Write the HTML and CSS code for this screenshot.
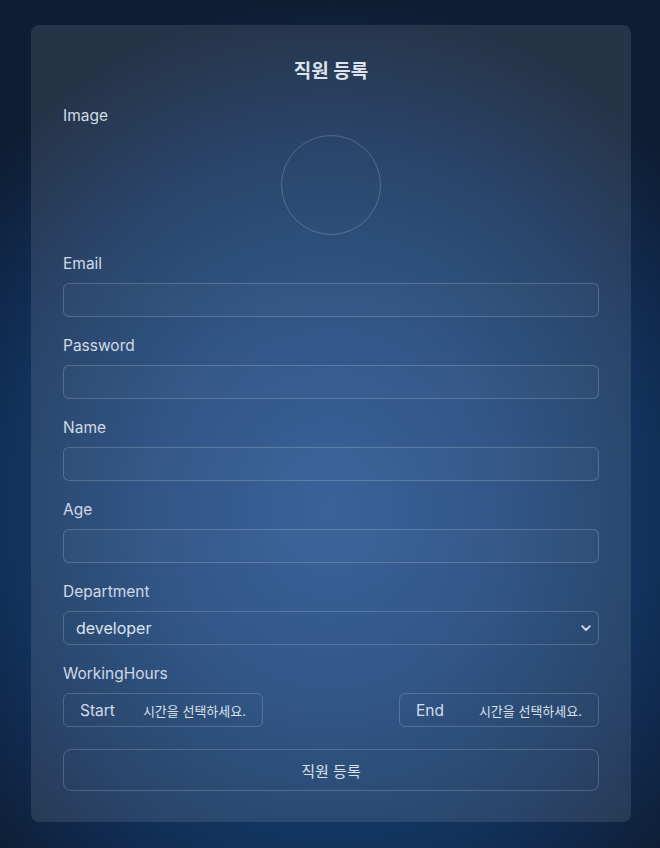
FILE: index.html
```html
<!DOCTYPE html>
<html lang="ko">
<head>
<meta charset="utf-8">
<link rel="stylesheet" href="styles.css">
</head>
<body>
<main class="page">
  <form class="card">
    <h2 class="title">직원 등록</h2>
    <div class="field">
      <label class="label">Image</label>
      <div class="avatar-wrap"><div class="avatar"></div></div>
    </div>
    <div class="field">
      <label class="label">Email</label>
      <input class="input" type="text">
    </div>
    <div class="field">
      <label class="label">Password</label>
      <input class="input" type="password">
    </div>
    <div class="field">
      <label class="label">Name</label>
      <input class="input" type="text">
    </div>
    <div class="field">
      <label class="label">Age</label>
      <input class="input" type="text">
    </div>
    <div class="field">
      <label class="label">Department</label>
      <div class="select">
        <span>developer</span>
        <svg class="chev" width="10" height="7" viewBox="0 0 10 7"><path d="M1.2 1.2 L5 5 L8.8 1.2" fill="none" stroke="#d6dfea" stroke-width="1.8" stroke-linecap="round" stroke-linejoin="round"/></svg>
      </div>
    </div>
    <div class="field">
      <label class="label">WorkingHours</label>
      <div class="hours">
        <div class="time"><span class="time-label">Start</span><span class="time-ph">시간을 선택하세요.</span></div>
        <div class="time"><span class="time-label">End</span><span class="time-ph">시간을 선택하세요.</span></div>
      </div>
    </div>
    <button class="submit" type="button">직원 등록</button>
  </form>
</main>
</body>
</html>
```
FILE: styles.css
```css
* { box-sizing: border-box; }
html, body { margin: 0; height: 100%; }
body {
  font-family: Inter, "Noto Sans CJK KR", sans-serif;
  background: radial-gradient(ellipse 70% 60% at 50% 60%, #23528f 0%, #1a4278 40%, #12315b 70%, #0e1d33 100%);
  color: #d3dce8;
}
.page {
  padding: 25px 30px 0 31px;
}
.card {
  width: 600px;
  background: rgba(255,255,255,0.1);
  border-radius: 8px;
  padding: 35px 32px 31px;
  display: flex;
  flex-direction: column;
}
.title {
  margin: 0 0 21px;
  text-align: center;
  font-size: 19px;
  line-height: 24px;
  font-weight: 700;
  color: #dbe3ee;
}
.field {
  display: flex;
  flex-direction: column;
  gap: 9px;
  margin-bottom: 18px;
}
.label {
  padding-top: 1px;
  font-size: 15.5px;
  line-height: 20px;
  color: #d0d9e6;
}
.avatar-wrap { display: flex; justify-content: center; }
.avatar {
  width: 100px; height: 100px;
  border-radius: 50%;
  border: 1px solid rgba(255,255,255,0.2);
}
.input {
  height: 34px;
  border: 1px solid rgba(255,255,255,0.18);
  border-radius: 6px;
  background: rgba(255,255,255,0.02);
  outline: none;
}
.select {
  height: 34px;
  border: 1px solid rgba(255,255,255,0.18);
  border-radius: 6px;
  display: flex;
  align-items: center;
  justify-content: space-between;
  padding: 0 7px 0 12px;
  font-size: 16px;
  color: #dbe3ee;
}
.hours {
  display: flex;
  justify-content: space-between;
}
.time {
  width: 200px;
  height: 34px;
  border: 1px solid rgba(255,255,255,0.18);
  border-radius: 6px;
  display: flex;
  align-items: center;
  justify-content: space-between;
  padding: 0 16px;
}
.time-label { font-size: 15.5px; color: #d3dce8; }
.time-ph { font-size: 13px; color: #d8e0ea; }
.submit {
  margin-top: 4px;
  height: 42px;
  border: 1px solid rgba(255,255,255,0.18);
  border-radius: 8px;
  background: transparent;
  font-family: Inter, "Noto Sans CJK KR", sans-serif;
  font-size: 15px;
  color: #d8e0ea;
}
```
